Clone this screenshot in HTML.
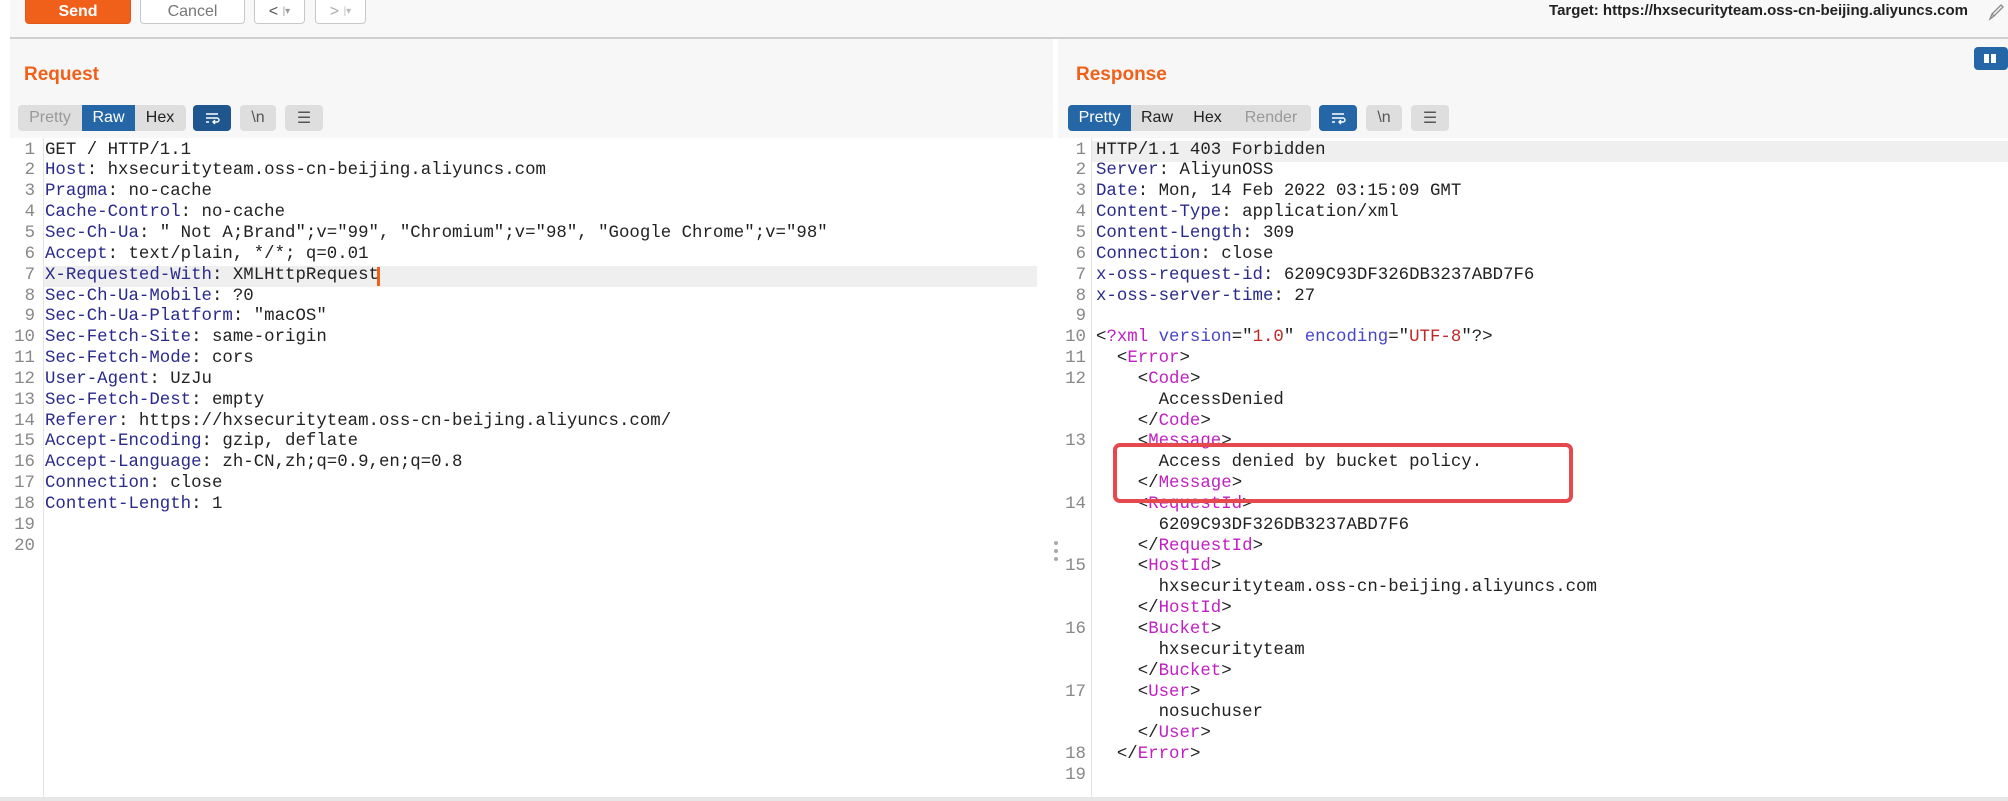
<!DOCTYPE html>
<html><head><meta charset="utf-8"><style>
*{margin:0;padding:0;box-sizing:border-box}
body{width:2008px;height:801px;background:#fff;position:relative;overflow:hidden;font-family:"Liberation Sans",sans-serif}
.a{position:absolute}
.btn{position:absolute;top:0;height:24px;border:1px solid #c8c8c8;border-top:none;border-radius:0 0 4px 4px;background:#fff;font-size:16px;color:#777;display:flex;align-items:center;justify-content:center}
.tab{position:absolute;top:105px;height:26px;font-size:16px;display:flex;align-items:center;justify-content:center}
.ic{position:absolute;top:105px;height:26px;border-radius:4px;background:#dedede;color:#555;font-size:16px;display:flex;align-items:center;justify-content:center}
.code{position:absolute;top:140.6px;font-family:"Liberation Mono",monospace;font-size:17.4px;line-height:20.84px;white-space:pre;color:#222}
.num{text-align:right;color:#888}
.k{color:#2a2a8c}.t{color:#c21fc2}.s{color:#c02828}.at{color:#4646c8}
</style></head><body>
<div class="a" style="left:10px;top:0;width:1998px;height:38px;background:#f8f8f8"></div>
<div class="a" style="left:10px;top:37px;width:1998px;height:2px;background:#cfcfcf"></div>
<div class="btn" style="left:25px;width:106px;background:#f0601a;border-color:#e0581a;color:#fff;font-weight:bold">Send</div>
<div class="btn" style="left:140px;width:105px">Cancel</div>
<div class="btn" style="left:254px;width:51px;color:#555">&lt;&nbsp;<span style="font-size:10px;color:#999">|▾</span></div>
<div class="btn" style="left:315px;width:51px;color:#aaa">&gt;&nbsp;<span style="font-size:10px;color:#bbb">|▾</span></div>
<div class="a" style="right:40px;top:2px;font-size:15px;font-weight:bold;color:#222">Target: https://hxsecurityteam.oss-cn-beijing.aliyuncs.com</div>
<svg class="a" style="left:1986px;top:2px" width="20" height="20" viewBox="0 0 20 20"><path d="M4 17 L6 12 L15 3 L17 5 L8 14 Z M6 12 L8 14" fill="none" stroke="#888" stroke-width="1.3"/></svg>

<div class="a" style="left:10px;top:39px;width:1043px;height:99px;background:#f7f7f7"></div>
<div class="a" style="left:1058px;top:39px;width:950px;height:99px;background:#f7f7f7"></div>
<div class="a" style="left:1974px;top:47px;width:34px;height:23px;background:#2566a6;border-radius:4px"><div class="a" style="left:10px;top:7px;width:5px;height:9px;background:#fff"></div><div class="a" style="left:17px;top:7px;width:5px;height:9px;background:#fff"></div></div>

<div class="a" style="left:24px;top:64px;font-size:19px;font-weight:bold;color:#f0601a">Request</div>
<div class="a" style="left:18px;top:105px;width:168px;height:26px;background:#dedede;border-radius:4px"></div>
<div class="tab" style="left:18px;width:64px;color:#999">Pretty</div>
<div class="tab" style="left:82px;width:53px;background:#2566a6;color:#fff">Raw</div>
<div class="tab" style="left:135px;width:50px;color:#222">Hex</div>
<div class="ic" style="left:193px;width:38px;background:#1f568e"><svg width="16" height="16" viewBox="0 0 16 16"><path d="M2 4H14M2 8H13a2 2 0 0 1 0 4H9M11 10L9 12L11 14M2 12H5" fill="none" stroke="#fff" stroke-width="1.4"/></svg></div>
<div class="ic" style="left:240px;width:36px">\n</div>
<div class="ic" style="left:285px;width:38px">☰</div>

<div class="a" style="left:1076px;top:64px;font-size:19px;font-weight:bold;color:#f0601a">Response</div>
<div class="a" style="left:1068px;top:105px;width:243px;height:26px;background:#dedede;border-radius:4px"></div>
<div class="tab" style="left:1068px;width:63px;background:#2566a6;color:#fff;border-radius:4px 0 0 4px">Pretty</div>
<div class="tab" style="left:1131px;width:52px;color:#222">Raw</div>
<div class="tab" style="left:1183px;width:49px;color:#222">Hex</div>
<div class="tab" style="left:1232px;width:78px;color:#999">Render</div>
<div class="ic" style="left:1319px;width:38px;background:#2566a6"><svg width="16" height="16" viewBox="0 0 16 16"><path d="M2 4H14M2 8H13a2 2 0 0 1 0 4H9M11 10L9 12L11 14M2 12H5" fill="none" stroke="#fff" stroke-width="1.4"/></svg></div>
<div class="ic" style="left:1366px;width:36px">\n</div>
<div class="ic" style="left:1411px;width:38px">☰</div>

<div class="a" style="left:43px;top:138px;width:1px;height:659px;background:#e4e4e4"></div>
<div class="a" style="left:44px;top:266px;width:993px;height:21px;background:#efefef"></div>
<div class="a" style="left:377px;top:267px;width:3px;height:19px;background:#f0601a"></div>
<div class="code num" style="left:0;width:35px">1
2
3
4
5
6
7
8
9
10
11
12
13
14
15
16
17
18
19
20</div>
<div class="code" style="left:45px">GET / HTTP/1.1
<span class="k">Host</span>: hxsecurityteam.oss-cn-beijing.aliyuncs.com
<span class="k">Pragma</span>: no-cache
<span class="k">Cache-Control</span>: no-cache
<span class="k">Sec-Ch-Ua</span>: " Not A;Brand";v="99", "Chromium";v="98", "Google Chrome";v="98"
<span class="k">Accept</span>: text/plain, */*; q=0.01
<span class="k">X-Requested-With</span>: XMLHttpRequest
<span class="k">Sec-Ch-Ua-Mobile</span>: ?0
<span class="k">Sec-Ch-Ua-Platform</span>: "macOS"
<span class="k">Sec-Fetch-Site</span>: same-origin
<span class="k">Sec-Fetch-Mode</span>: cors
<span class="k">User-Agent</span>: UzJu
<span class="k">Sec-Fetch-Dest</span>: empty
<span class="k">Referer</span>: https://hxsecurityteam.oss-cn-beijing.aliyuncs.com/
<span class="k">Accept-Encoding</span>: gzip, deflate
<span class="k">Accept-Language</span>: zh-CN,zh;q=0.9,en;q=0.8
<span class="k">Connection</span>: close
<span class="k">Content-Length</span>: 1

</div>

<div class="a" style="left:1053px;top:138px;width:5px;height:659px;background:#fff"></div>
<div class="a" style="left:1054px;top:541px;width:4px;height:4px;border-radius:2px;background:#aaa"></div>
<div class="a" style="left:1054px;top:549px;width:4px;height:4px;border-radius:2px;background:#aaa"></div>
<div class="a" style="left:1054px;top:557px;width:4px;height:4px;border-radius:2px;background:#aaa"></div>

<div class="a" style="left:1091px;top:138px;width:1px;height:659px;background:#e4e4e4"></div>
<div class="a" style="left:1092px;top:141px;width:916px;height:21px;background:#efefef"></div>
<div class="code num" style="left:1050px;width:36px">1
2
3
4
5
6
7
8
9
10
11
12


13


14


15


16


17


18
19</div>
<div class="code" style="left:1096px">HTTP/1.1 403 Forbidden
<span class="k">Server</span>: AliyunOSS
<span class="k">Date</span>: Mon, 14 Feb 2022 03:15:09 GMT
<span class="k">Content-Type</span>: application/xml
<span class="k">Content-Length</span>: 309
<span class="k">Connection</span>: close
<span class="k">x-oss-request-id</span>: 6209C93DF326DB3237ABD7F6
<span class="k">x-oss-server-time</span>: 27

&lt;<span class="t">?xml</span> <span class="at">version</span>="<span class="s">1.0</span>" <span class="at">encoding</span>="<span class="s">UTF-8</span>"?&gt;
  &lt;<span class="t">Error</span>&gt;
    &lt;<span class="t">Code</span>&gt;
      AccessDenied
    &lt;/<span class="t">Code</span>&gt;
    &lt;<span class="t">Message</span>&gt;
      Access denied by bucket policy.
    &lt;/<span class="t">Message</span>&gt;
    &lt;<span class="t">RequestId</span>&gt;
      6209C93DF326DB3237ABD7F6
    &lt;/<span class="t">RequestId</span>&gt;
    &lt;<span class="t">HostId</span>&gt;
      hxsecurityteam.oss-cn-beijing.aliyuncs.com
    &lt;/<span class="t">HostId</span>&gt;
    &lt;<span class="t">Bucket</span>&gt;
      hxsecurityteam
    &lt;/<span class="t">Bucket</span>&gt;
    &lt;<span class="t">User</span>&gt;
      nosuchuser
    &lt;/<span class="t">User</span>&gt;
  &lt;/<span class="t">Error</span>&gt;
</div>
<div class="a" style="left:1113px;top:443px;width:460px;height:60px;border:4px solid #e5484d;border-radius:7px"></div>

<div class="a" style="left:0;top:797px;width:2008px;height:4px;background:#e6e6e6"></div>
</body></html>
